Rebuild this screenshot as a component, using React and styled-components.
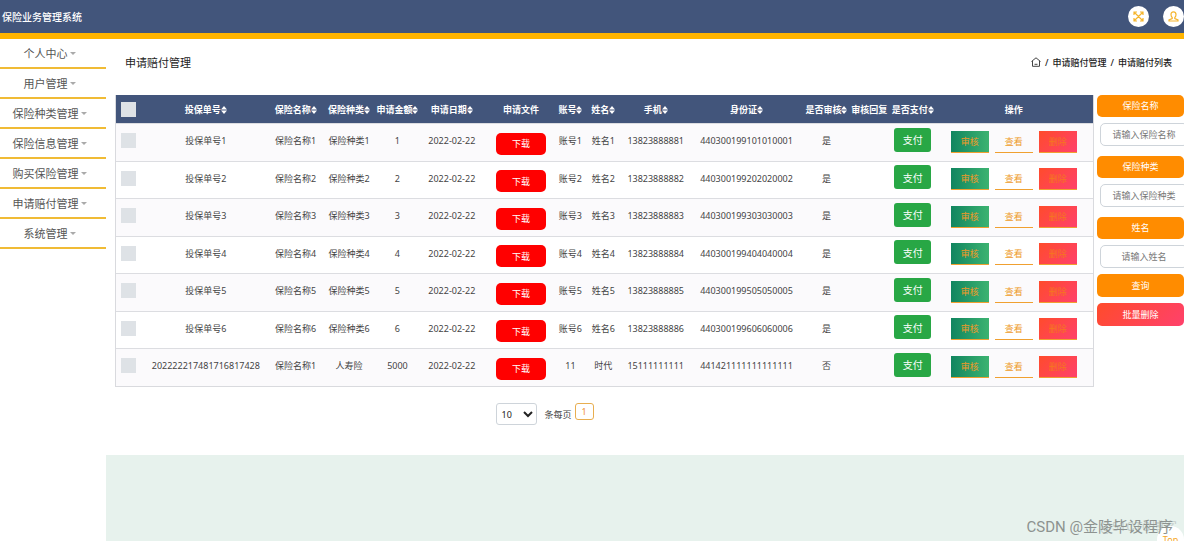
import React from 'react';
import styled, { createGlobalStyle } from 'styled-components';

const GlobalStyle = createGlobalStyle`
  * {
    box-sizing: border-box;
  }

  body {
    margin: 0;
    background: #fff;
    color: #444;
    font-family: 'Noto Sans', 'Noto Sans CJK SC', sans-serif;
    font-size: 9px;
    overflow: hidden;
  }

  button,
  input,
  select {
    font-family: inherit;
    font-size: 9px;
  }
`;

const Page = styled.div`
  height: 100vh;
  display: flex;
  flex-direction: column;
  overflow: hidden;
`;

const Header = styled.header`
  display: flex;
  align-items: center;
  justify-content: space-between;
  height: 39px;
  padding-left: 2px;
  flex-shrink: 0;
  background: #42557b;
  border-bottom: 6px solid #ffb400;
`;

const Brand = styled.h1`
  margin: 0;
  color: #fff;
  font-size: 10px;
  font-weight: 500;
`;

const HeaderActions = styled.div`
  display: flex;
  gap: 14px;
`;

const RoundButton = styled.button`
  display: flex;
  align-items: center;
  justify-content: center;
  width: 21px;
  height: 21px;
  padding: 0;
  border: 0;
  border-radius: 50%;
  background: #fff;
  color: #f5b52e;
`;

const Body = styled.div`
  display: flex;
  flex: 1;
  min-height: 0;
`;

const Sidebar = styled.nav`
  width: 106px;
  flex-shrink: 0;
`;

const MenuLink = styled.a`
  display: flex;
  align-items: center;
  justify-content: center;
  gap: 2px;
  height: 30px;
  padding-right: 7px;
  border-bottom: 2px solid #f0bb35;
  color: #555;
  font-size: 11px;
  text-decoration: none;
`;

const Caret = styled.span`
  border: 3px solid transparent;
  border-top-color: #aaa;
  border-bottom: 0;
`;

const Main = styled.main`
  display: flex;
  flex-direction: column;
  flex: 1;
  min-width: 0;
`;

const TitleBar = styled.div`
  display: flex;
  align-items: center;
  justify-content: space-between;
  height: 46px;
  padding: 0 12px 0 19px;
  color: #222;
`;

const Title = styled.h2`
  margin: 0;
  font-size: 11px;
  font-weight: 400;
`;

const Breadcrumb = styled.div`
  display: flex;
  align-items: center;
  gap: 4px;
  font-weight: 500;
`;

const Content = styled.div`
  display: flex;
  align-items: flex-start;
  gap: 3px;
  padding: 10px 0 0 9px;
`;

const Table = styled.table`
  flex: 1;
  min-width: 0;
  table-layout: fixed;
  border-collapse: separate;
  border-spacing: 0;
  border: 1px solid #d9dade;
  border-top: 0;
  text-align: center;
  white-space: nowrap;
`;

const HeadCell = styled.th`
  height: 28px;
  padding: 0;
  background: #42557b;
  color: #fff;
  font-weight: 700;
`;

const Sort = styled.svg`
  width: 6px;
  height: 8px;
  vertical-align: -1px;
`;

const Row = styled.tr`
  height: 37px;

  &:nth-child(odd) {
    height: 38px;
    background: #fbfafc;
  }
`;

const Cell = styled.td`
  padding: ${(props) => props.$pad || '0 0 4px'};
  border-top: 1px solid #dcdde1;
  vertical-align: middle;
`;

const Tick = styled.input`
  appearance: none;
  display: block;
  width: 15px;
  height: 15px;
  margin: 0 0 0 5px;
  background: #dee2e6;
`;

const DownloadButton = styled.button`
  width: 50px;
  height: 22px;
  padding: 0;
  border: 0;
  border-radius: 5px;
  background: #f00;
  color: #fff;
`;

const PayButton = styled.button`
  width: 37px;
  height: 24px;
  padding: 0;
  border: 0;
  border-radius: 3px;
  background: #28a745;
  color: #fff;
  font-size: 10px;
`;

const Actions = styled.div`
  display: flex;
  justify-content: center;
  gap: 6px;
`;

const ActionButton = styled.button`
  width: 38px;
  height: 22px;
  padding: 0;
  border: 0;
  border-bottom: 1px solid #f0a030;
  background: ${(props) => props.$fill || 'transparent'};
  color: ${(props) => props.$color || '#ee9a28'};
`;

const Pager = styled.div`
  display: flex;
  align-items: center;
  justify-content: center;
  gap: 3px;
  height: 22px;
  margin: 16px 104px 30px 0;
  padding-right: 96px;
`;

const PageSize = styled.select`
  width: 41px;
  height: 22px;
  padding: 0;
  border: 1px solid #ced4da;
  border-radius: 3px;
  background: #fff;
  color: #222;
`;

const PagerLabel = styled.label`
  display: flex;
  align-items: center;
  gap: 7px;
`;

const PageButton = styled.button`
  align-self: flex-start;
  width: 19px;
  height: 17px;
  padding: 0;
  border: 1px solid #e8ae50;
  border-radius: 3px;
  background: #fff;
  color: #f09030;
`;

const Filters = styled.form`
  display: flex;
  flex-direction: column;
  width: 87px;
  flex-shrink: 0;
`;

const FilterLabel = styled.label`
  height: 22px;
  border-radius: 5px;
  background: #ff8c00;
  color: #fff;
  line-height: 22px;
  text-align: center;
`;

const FilterInput = styled.input`
  width: 88px;
  height: 23px;
  margin: 6px 0 10px 3px;
  padding: 0;
  border: 1px solid #ced4da;
  border-radius: 5px;
  text-align: center;

  &:last-of-type {
    margin-bottom: 6px;
  }

  &::placeholder {
    color: #777;
  }
`;

const FilterButton = styled.button`
  height: 23px;
  margin-bottom: 6px;
  padding: 0;
  border: 0;
  border-radius: 5px;
  background: ${(props) => props.$fill};
  color: #fff;
`;

const Footer = styled.footer`
  position: relative;
  flex: 1;
  background: #e7f2ed;
`;

const Watermark = styled.span`
  position: absolute;
  right: 11px;
  bottom: 3px;
  color: #8d9390;
  font-family: Roboto, 'Noto Sans CJK SC', sans-serif;
  font-size: 15px;
  line-height: 22px;
  white-space: nowrap;
`;

const FaintMark = styled(Watermark)`
  right: 7px;
  color: #c6cecb;
  font-size: 13px;
`;

const TopButton = styled.button`
  position: absolute;
  right: 0;
  bottom: -12px;
  width: 27px;
  height: 27px;
  padding: 0;
  border: 0;
  border-radius: 50%;
  background: #fff;
  color: #f5a623;
`;

const menus = ['个人中心', '用户管理', '保险种类管理', '保险信息管理', '购买保险管理', '申请赔付管理', '系统管理'];

const columns = [
  { label: '投保单号', width: 126, sort: true },
  { label: '保险名称', width: 54, sort: true },
  { label: '保险种类', width: 53, sort: true },
  { label: '申请金额', width: 44, sort: true },
  { label: '申请日期', width: 65, sort: true },
  { label: '申请文件', width: 74 },
  { label: '账号', width: 25, sort: true },
  { label: '姓名', width: 41, sort: true },
  { label: '手机', width: 64, sort: true },
  { label: '身份证', width: 118, sort: true },
  { label: '是否审核', width: 42, sort: true },
  { label: '审核回复', width: 44 },
  { label: '是否支付', width: 43, sort: true },
  { label: '操作', width: 159 },
];

const claims = [1, 2, 3, 4, 5, 6].map((n) => ({
  policy: `投保单号${n}`,
  name: `保险名称${n}`,
  type: `保险种类${n}`,
  amount: n,
  account: `账号${n}`,
  user: `姓名${n}`,
  phone: `1382388888${n}`,
  idCard: `440300199${n}0${n}0${n}000${n}`,
  reviewed: '是',
}));

claims.push({
  policy: '202222217481716817428',
  name: '保险名称1',
  type: '人寿险',
  amount: 5000,
  account: '11',
  user: '时代',
  phone: '15111111111',
  idCard: '441421111111111111',
  reviewed: '否',
});

const filters = [
  { id: 'name', label: '保险名称' },
  { id: 'type', label: '保险种类' },
  { id: 'user', label: '姓名' },
];

const redFill = 'linear-gradient(135deg, #ff4b2b, #ff416c)';

function App() {
  return (
    <>
      <GlobalStyle />
      <Page>
        <Header>
          <Brand>保险业务管理系统</Brand>
          <HeaderActions>
            <RoundButton aria-label="全屏">
              <svg width="11" height="11" viewBox="0 0 11 11" fill="none" stroke="currentColor" strokeWidth="1.2">
                <path d="M1 4V1h3M7 1h3v3M10 7v3H7M4 10H1V7M1 1l9 9M10 1l-9 9" />
              </svg>
            </RoundButton>
            <RoundButton aria-label="用户">
              <svg width="11" height="11" viewBox="0 0 11 11" fill="none" stroke="currentColor" strokeWidth="1.2">
                <path d="M5.5 .8C3.7.8 3 2 3 3.500S3.700 6 4.200 6.500V7.500L1 9v1h9V9L6.800 7.500V6.500C7.300 6 8 5 8 3.500S7.300.8 5.500.8z" />
              </svg>
            </RoundButton>
          </HeaderActions>
        </Header>
        <Body>
          <Sidebar>
            {menus.map((menu) => (
              <MenuLink key={menu} href="#">
                {menu}
                <Caret />
              </MenuLink>
            ))}
          </Sidebar>
          <Main>
            <TitleBar>
              <Title>申请赔付管理</Title>
              <Breadcrumb>
                <svg width="10" height="10" viewBox="0 0 10 10" fill="none" stroke="#444">
                  <path d="M.5 4.500L5 .8l4.500 3.700M1.500 4v5.300h7V4M3.500 7.300h3" />
                </svg>
                <span>/</span>
                <span>申请赔付管理</span>
                <span>/</span>
                <span>申请赔付列表</span>
              </Breadcrumb>
            </TitleBar>
            <Content>
              <Table>
                <colgroup>
                  <col style={{ width: 27 }} />
                  {columns.map((col) => (
                    <col key={col.label} style={{ width: col.width }} />
                  ))}
                </colgroup>
                <thead>
                  <tr>
                    <HeadCell>
                      <Tick type="checkbox" aria-label="全选" />
                    </HeadCell>
                    {columns.map((col) => (
                      <HeadCell key={col.label}>
                        {col.label}
                        {col.sort && (
                          <Sort viewBox="0 0 6 8" fill="#fff">
                            <path d="M3 0l3 3.500H0zM3 8L0 4.500h6z" />
                          </Sort>
                        )}
                      </HeadCell>
                    ))}
                  </tr>
                </thead>
                <tbody>
                  {claims.map((claim) => (
                    <Row key={claim.policy}>
                      <Cell>
                        <Tick type="checkbox" aria-label={claim.policy} />
                      </Cell>
                      <Cell>{claim.policy}</Cell>
                      <Cell>{claim.name}</Cell>
                      <Cell>{claim.type}</Cell>
                      <Cell>{claim.amount}</Cell>
                      <Cell>2022-02-22</Cell>
                      <Cell $pad="2px 0 0">
                        <DownloadButton>下载</DownloadButton>
                      </Cell>
                      <Cell>{claim.account}</Cell>
                      <Cell>{claim.user}</Cell>
                      <Cell>{claim.phone}</Cell>
                      <Cell>{claim.idCard}</Cell>
                      <Cell>{claim.reviewed}</Cell>
                      <Cell />
                      <Cell $pad="0 0 6px">
                        <PayButton>支付</PayButton>
                      </Cell>
                      <Cell $pad="0 0 2px">
                        <Actions>
                          <ActionButton $fill="linear-gradient(90deg, #11855f, #3cb371)">审核</ActionButton>
                          <ActionButton>查看</ActionButton>
                          <ActionButton $fill={redFill} $color="#f5771e">
                            删除
                          </ActionButton>
                        </Actions>
                      </Cell>
                    </Row>
                  ))}
                </tbody>
              </Table>
              <Filters>
                {filters.map(({ id, label }) => (
                  <React.Fragment key={id}>
                    <FilterLabel htmlFor={id}>{label}</FilterLabel>
                    <FilterInput id={id} placeholder={`请输入${label}`} />
                  </React.Fragment>
                ))}
                <FilterButton type="button" $fill="#ff8c00">
                  查询
                </FilterButton>
                <FilterButton type="button" $fill={redFill}>
                  批量删除
                </FilterButton>
              </Filters>
            </Content>
            <Pager>
              <PagerLabel>
                <PageSize>
                  <option>10</option>
                </PageSize>
                条每页
              </PagerLabel>
              <PageButton>1</PageButton>
            </Pager>
            <Footer>
              <FaintMark>@51CTO博客</FaintMark>
              <TopButton>Top</TopButton>
              <Watermark>CSDN @金陵毕设程序</Watermark>
            </Footer>
          </Main>
        </Body>
      </Page>
    </>
  );
}

export default App;
